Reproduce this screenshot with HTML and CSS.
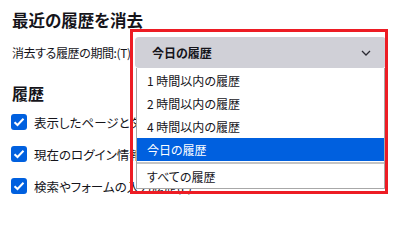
FILE: index.html
```html
<!DOCTYPE html>
<html lang="ja">
<head>
<meta charset="utf-8">
<link rel="stylesheet" href="styles.css">
</head>
<body>
<div class="dialog">
  <h1 class="title">最近の履歴を消去</h1>
  <div class="range-row">
    <span class="range-label">消去する履歴の期間:(T)</span>
    <div class="select-wrap">
      <div class="select">
        <span class="select-value">今日の履歴</span>
        <svg class="chevron" width="10" height="6" viewBox="0 0 10 6"><path d="M1 1 L5 5 L9 1" fill="none" stroke="#2b2a33" stroke-width="1.3"/></svg>
      </div>
      <ul class="menu">
        <li class="item">1 時間以内の履歴</li>
        <li class="item">2 時間以内の履歴</li>
        <li class="item">4 時間以内の履歴</li>
        <li class="item selected">今日の履歴</li>
        <li class="sep"></li>
        <li class="item">すべての履歴</li>
      </ul>
    </div>
  </div>
  <h2 class="section">履歴</h2>
  <div class="checks">
    <div class="check"><span class="box"><svg width="12" height="10" viewBox="0 0 12 10"><path d="M1.5 5.2 L4.5 8 L10.5 1.8" fill="none" stroke="#fff" stroke-width="2"/></svg></span><span class="check-label">表示したページとダウンロードの履歴(B)</span></div>
    <div class="check"><span class="box"><svg width="12" height="10" viewBox="0 0 12 10"><path d="M1.5 5.2 L4.5 8 L10.5 1.8" fill="none" stroke="#fff" stroke-width="2"/></svg></span><span class="check-label">現在のログイン情報(L)</span></div>
    <div class="check"><span class="box"><svg width="12" height="10" viewBox="0 0 12 10"><path d="M1.5 5.2 L4.5 8 L10.5 1.8" fill="none" stroke="#fff" stroke-width="2"/></svg></span><span class="check-label">検索やフォームの入力履歴(F)</span></div>
  </div>
</div>
<div class="highlight-box"></div>
</body>
</html>
```
FILE: styles.css
```css
html, body {
  margin: 0;
  padding: 0;
  background: #fff;
}
body {
  width: 394px;
  height: 205px;
  overflow: hidden;
  position: relative;
  font-family: "Noto Sans CJK JP", "Noto Sans", sans-serif;
  font-feature-settings: "palt";
  color: #15141a;
}
.dialog {
  padding: 9px 0 0 12px;
}
.title {
  margin: 0;
  font-size: 16.5px;
  line-height: 22px;
  font-weight: 700;
}
.range-row {
  display: flex;
  align-items: center;
  gap: 7px;
  margin-top: 6px;
}
.range-label {
  font-size: 12px;
  letter-spacing: -0.4px;
  width: 116px;
  white-space: nowrap;
}
.select-wrap {
  position: relative;
  width: 251px;
}
.select {
  height: 31px;
  background: #d0d0d7;
  border-radius: 4px;
  display: flex;
  align-items: center;
  justify-content: space-between;
  padding: 0 15px 0 17px;
}
.select-value {
  font-size: 12px;
  font-weight: 700;
}
.chevron {
  display: block;
}
.menu {
  position: absolute;
  top: 31px;
  left: 1px;
  right: 1px;
  margin: 0;
  padding: 1px 0 0;
  list-style: none;
  background: #fff;
  border: 1px solid #a8a8a8;
  border-top: none;
  z-index: 2;
}
.item {
  height: 23px;
  line-height: 23px;
  padding-left: 10px;
  font-size: 12px;
  color: #15141a;
}
.item.selected {
  background: #0060df;
  color: #fff;
}
.sep {
  height: 2px;
  margin: 1px 0 1px;
  background: #c4c4c4;
}
.section {
  margin: 14px 0 0;
  font-size: 16px;
  line-height: 22px;
  font-weight: 700;
}
.checks {
  display: flex;
  flex-direction: column;
  gap: 16px;
  margin-top: 10px;
}
.check {
  display: flex;
  align-items: center;
  gap: 7px;
  height: 16px;
}
.box {
  width: 16px;
  height: 16px;
  border-radius: 3px;
  background: #0060df;
  display: flex;
  align-items: center;
  justify-content: center;
  margin-left: -1px;
  flex: none;
}
.box svg {
  display: block;
}
.check-label {
  font-size: 12.5px;
  white-space: nowrap;
}
.highlight-box {
  position: absolute;
  left: 130px;
  top: 29px;
  width: 252px;
  height: 159px;
  border: 3px solid #ed1c24;
  z-index: 3;
}
```
